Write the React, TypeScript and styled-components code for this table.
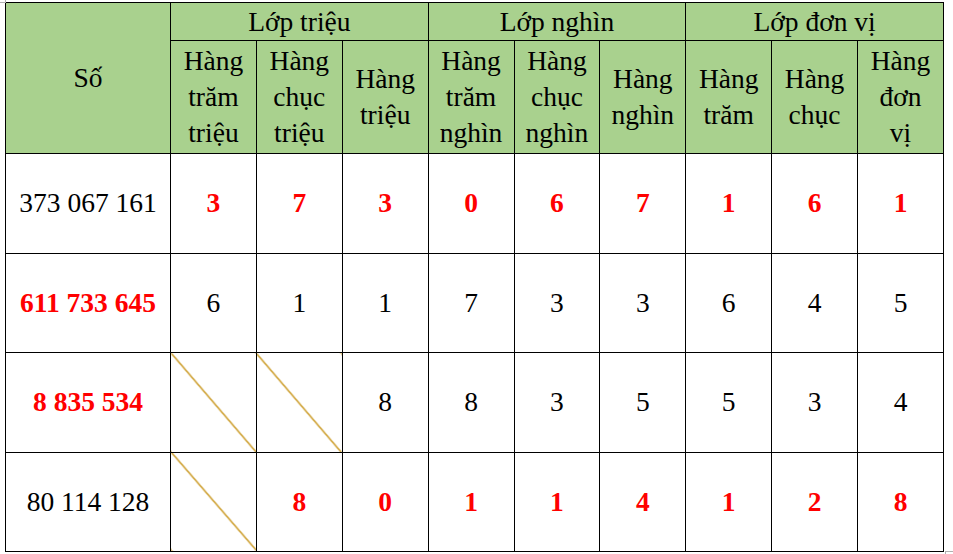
import React from "react";
import styled, { createGlobalStyle } from "styled-components";

const GlobalStyle = createGlobalStyle`
    html, body {
        margin: 0;
        padding: 0;
        background: #ffffff;
    }
    body {
        font-family: "Liberation Serif", "Times New Roman", serif;
    }
`;

type Cell = { v: string; red?: boolean } | null;

const rows: { num: string; red?: boolean; cells: Cell[] }[] = [
    {
        num: "373 067 161",
        cells: ["3", "7", "3", "0", "6", "7", "1", "6", "1"].map((v) => ({ v, red: true })),
    },
    {
        num: "611 733 645",
        red: true,
        cells: ["6", "1", "1", "7", "3", "3", "6", "4", "5"].map((v) => ({ v })),
    },
    {
        num: "8 835 534",
        red: true,
        cells: [null, null, ...["8", "8", "3", "5", "5", "3", "4"].map((v) => ({ v }))],
    },
    {
        num: "80 114 128",
        cells: [null, ...["8", "0", "1", "1", "4", "1", "2", "8"].map((v) => ({ v, red: true }))],
    },
];

const groups = ["Lớp triệu", "Lớp nghìn", "Lớp đơn vị"];

const subHeads: string[][] = [
    ["Hàng", "trăm", "triệu"],
    ["Hàng", "chục", "triệu"],
    ["Hàng", "triệu"],
    ["Hàng", "trăm", "nghìn"],
    ["Hàng", "chục", "nghìn"],
    ["Hàng", "nghìn"],
    ["Hàng", "trăm"],
    ["Hàng", "chục"],
    ["Hàng", "đơn", "vị"],
];

const App = () => {
    return (
        <Page>
            <GlobalStyle />
            <CropTL />
            <Table>
                <colgroup>
                    <col style={{ width: 165 }} />
                    {subHeads.map((_, i) => (
                        <col key={i} />
                    ))}
                </colgroup>
                <thead>
                    <GroupRow>
                        <Head rowSpan={2}>Số</Head>
                        {groups.map((g) => (
                            <Head key={g} colSpan={3}>
                                {g}
                            </Head>
                        ))}
                    </GroupRow>
                    <SubRow>
                        {subHeads.map((lines, i) => (
                            <Head key={i}>
                                {lines.map((l, j) => (
                                    <Line key={j}>{l}</Line>
                                ))}
                            </Head>
                        ))}
                    </SubRow>
                </thead>
                <tbody>
                    {rows.map((r) => (
                        <DataRow key={r.num}>
                            <Cell $red={r.red}>{r.num}</Cell>
                            {r.cells.map((c, i) =>
                                c ? (
                                    <Cell key={i} $red={c.red}>
                                        {c.v}
                                    </Cell>
                                ) : (
                                    <Struck key={i} />
                                )
                            )}
                        </DataRow>
                    ))}
                </tbody>
            </Table>
            <CropBR />
        </Page>
    );
};

export default App;

const Page = styled.div`
    position: relative;
    width: 953px;
    height: 554px;
    padding: 2px 0 0 5px;
    box-sizing: border-box;
`;

const CropTL = styled.div`
    position: absolute;
    left: 0;
    top: 0;
    width: 5px;
    height: 2px;
    border-right: 1px solid #b0b0b0;
    border-bottom: 1px solid #b0b0b0;
`;

const CropBR = styled.div`
    position: absolute;
    left: 945px;
    top: 551px;
    width: 8px;
    height: 3px;
    border-left: 1px solid #b0b0b0;
    border-top: 1px solid #b0b0b0;
`;

const Table = styled.table`
    width: 939px;
    border-collapse: collapse;
    table-layout: fixed;
    font-family: "Liberation Serif", "Times New Roman", serif;
    font-size: 27.5px;
    color: #000;
`;

const GroupRow = styled.tr`
    height: 38px;
`;

const SubRow = styled.tr`
    height: 113px;
`;

const DataRow = styled.tr`
    height: 99.5px;
`;

const Head = styled.th`
    background: #a9d18e;
    border: 1px solid #000;
    font-family: "Liberation Serif", "Times New Roman", serif;
    font-weight: normal;
    padding: 0;
    text-align: center;
    vertical-align: middle;
    line-height: 36px;
`;

const Line = styled.div`
    line-height: 36px;
`;

const Cell = styled.td<{ $red?: boolean }>`
    border: 1px solid #000;
    padding: 0;
    text-align: center;
    vertical-align: middle;
    font-family: "Liberation Serif", "Times New Roman", serif;
    color: ${(p) => (p.$red ? "#ff0000" : "#000")};
    font-weight: ${(p) => (p.$red ? "bold" : "normal")};
`;

const Struck = styled.td`
    border: 1px solid #000;
    padding: 0;
    background: linear-gradient(
        to top right,
        transparent calc(50% - 1px),
        #c8951a calc(50% - 0.4px),
        #c8951a calc(50% + 0.4px),
        transparent calc(50% + 1px)
    );
`;
